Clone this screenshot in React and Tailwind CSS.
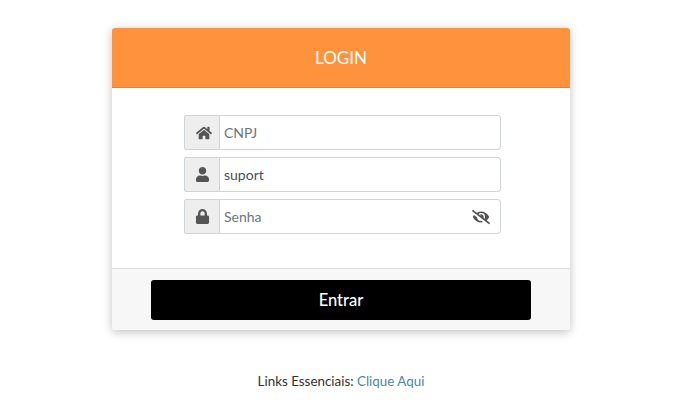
import { FaHome, FaUser, FaLock, FaEyeSlash } from 'react-icons/fa';

function Field({ icon, placeholder, value, children }) {
  return (
    <div className="flex h-[35px] w-[317px]">
      <div className="w-[36px] shrink-0 flex items-center justify-center bg-[#eeeeee] border border-[#ced4da] rounded-l-[2px] text-[#555555]">
        {icon}
      </div>
      <div className="flex-1 flex items-center justify-between border border-l-0 border-[#ced4da] rounded-r-[4px] bg-white pl-1 pr-[10px]">
        <input
          type="text"
          defaultValue={value}
          placeholder={placeholder}
          className="w-[200px] outline-none bg-transparent text-[14px] text-[#495057] placeholder:text-[#6c757d]"
        />
        {children}
      </div>
    </div>
  );
}

export default function App() {
  return (
    <div className="w-[682px] pt-[28px] flex flex-col items-center bg-white font-['Lato',sans-serif]">
      <div className="w-[458px] rounded-[3px] shadow-[0_2px_10px_rgba(0,0,0,0.25)] overflow-hidden">
        <div className="h-[60px] bg-[#ff923d] border-b border-[#e8833a] flex items-center justify-center pt-[1px] text-white text-[17px]">
          LOGIN
        </div>
        <div className="h-[180px] bg-white flex flex-col items-start gap-[7px] pt-[27px] pl-[72px]">
          <Field icon={<FaHome size={16} className="ml-[3px]" />} placeholder="CNPJ" />
          <Field icon={<FaUser size={15} />} value="suport" />
          <Field icon={<FaLock size={15} />} placeholder="Senha">
            <FaEyeSlash size={18} className="text-[#555555]" />
          </Field>
        </div>
        <div className="h-[62px] bg-[#f7f7f7] border-t border-[#dddddd] flex justify-center pt-[11px]">
          <button className="w-[380px] h-[40px] bg-black text-white text-[16.5px] font-medium rounded-[3px]">
            Entrar
          </button>
        </div>
      </div>
      <p className="mt-[41px] text-[13.4px] text-[#333333]">
        Links Essenciais: <a href="#" className="text-[#4a86b0]">Clique Aqui</a>
      </p>
    </div>
  );
}
